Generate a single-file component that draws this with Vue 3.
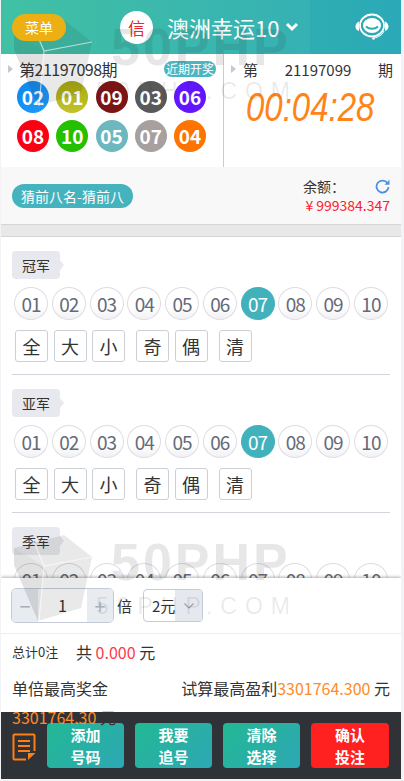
<template>
  <div class="page">
    <header class="top">
      <button class="menu-btn">菜单</button>
      <div class="title-wrap">
        <span class="xin">信</span>
        <span class="title">澳洲幸运10</span>
        <svg class="chev" width="14" height="10" viewBox="0 0 14 10"><path d="M2 2l5 5 5-5" fill="none" stroke="#fff" stroke-width="3" /></svg>
      </div>
      <svg class="headset" width="34" height="28" viewBox="0 0 34 28">
        <ellipse cx="17" cy="12.500" rx="12" ry="11" fill="none" stroke="#fff" stroke-width="1.800" />
        <path d="M4 8.500c-2.500 1-3.500 3-3.500 5s1 3.500 3.500 4.500zM30 8.500c2.500 1 3.500 3 3.500 5s-1 3.500-3.500 4.500z" fill="#fff" />
        <ellipse cx="17" cy="12.500" rx="9" ry="7.500" fill="#fff" />
        <path d="M11 13.500c3 3 9 3 12 0" fill="none" stroke="#2dadb3" stroke-width="2" />
        <path d="M29 18c-2 5-6 6-10 7" fill="none" stroke="#fff" stroke-width="1" />
        <circle cx="18.500" cy="25.500" r="1.300" fill="#fff" />
      </svg>
    </header>

    <section class="info">
      <div class="last">
        <div class="issue-row">
          <span class="tri"></span>
          <span class="issue">第21197098期</span>
          <span class="recent">近期开奖</span>
        </div>
        <div class="balls">
          <span v-for="b in drawn" :key="b.n" class="ball" :style="{ background: b.c }">{{ b.n }}</span>
        </div>
      </div>
      <div class="next">
        <div class="next-row">
          <span class="tri"></span>
          <span class="next-issue"><span>第</span><span>21197099</span><span>期</span></span>
        </div>
        <div class="clock">00:04:28</div>
      </div>
    </section>

    <section class="balance-bar">
      <span class="play-pill">猜前八名-猜前八</span>
      <div class="balance">
        <div class="balance-top">
          <span>余额：</span>
          <svg width="15" height="15" viewBox="0 0 15 15">
            <path d="M12.500 4.200A6 6 0 1 0 13.500 8" fill="none" stroke="#4a90e8" stroke-width="1.800" />
            <path d="M14.500 0.800v5h-5z" fill="#4a90e8" />
          </svg>
        </div>
        <div class="money"><span class="yen">¥</span>999384.347</div>
      </div>
    </section>
    <div class="band"></div>

    <main class="sections">
      <div v-for="(s, i) in ranks" :key="s" class="rank">
        <div class="rank-tag">{{ s }}</div>
        <div class="nums">
          <span v-for="n in nums" :key="n" :class="['num', { on: n === '07' && i < 2 }]">{{ n }}</span>
        </div>
        <div class="quick">
          <span v-for="q in quicks" :key="q.t" :class="['q', { gapped: q.gap }]">{{ q.t }}</span>
        </div>
      </div>
    </main>

    <footer class="panel">
      <div class="bet-row">
        <div class="stepper">
          <span class="step">−</span>
          <span class="val">1</span>
          <span class="step">+</span>
        </div>
        <span class="bei">倍</span>
        <div class="unit">
          <span class="unit-val">2元</span>
          <span class="unit-arrow">
            <svg width="12" height="8" viewBox="0 0 12 8"><path d="M1.500 1.500L6 6l4.500-4.500" fill="none" stroke="#9aa1ad" stroke-width="1.200" /></svg>
          </span>
        </div>
      </div>
      <div class="total-row">
        <span class="count">总计0注</span>
        <span class="sum">共 <em class="red">0.000</em> 元</span>
      </div>
      <div class="prize-row">
        <div class="prize-left">单倍最高奖金 <em class="orange">3301764.30</em> 元</div>
        <div class="prize-right">试算最高盈利<em class="orange">3301764.300</em> 元</div>
      </div>
      <div class="actions">
        <svg class="note" width="24" height="28" viewBox="0 0 24 28">
          <path d="M14 26.500H2.500a1 1 0 0 1-1-1V2.500a1 1 0 0 1 1-1h19a1 1 0 0 1 1 1V18" fill="none" stroke="#ff7f14" stroke-width="2" />
          <path d="M6 8h12M6 13h12M6 18h12" stroke="#ff7f14" stroke-width="2" />
          <path d="M16 27v-7h7.500z" fill="#ff7f14" />
        </svg>
        <button class="act">添加<br />号码</button>
        <button class="act">我要<br />追号</button>
        <button class="act">清除<br />选择</button>
        <button class="act red-btn">确认<br />投注</button>
      </div>
    </footer>

    <div v-for="w in ['wm-top', 'wm-bottom']" :key="w" :class="['watermark', w]">
      <svg class="wm-shield" width="80" height="96" viewBox="0 0 80 96">
        <path d="M1 20L51 7 79 29 68 80 25 93 1 37z" fill="rgba(40,40,40,.1)" />
        <path d="M1 37L25 93 31 38 1 20z" fill="rgba(40,40,40,.04)" />
        <path d="M20 12L31 38 79 29M31 38L26 93" fill="none" stroke="#fff" stroke-opacity=".6" stroke-width="1.200" />
      </svg>
      <div class="wm-big">50PHP</div>
      <div class="wm-small">50PHP.COM</div>
    </div>
  </div>
</template>

<script setup>
const drawn = [
  { n: '02', c: 'linear-gradient(135deg,#0f86ea,#1d9cff)' },
  { n: '01', c: 'linear-gradient(180deg,#a8a810,#c2c22a)' },
  { n: '09', c: '#7b1515' },
  { n: '03', c: '#595959' },
  { n: '06', c: '#6116ff' },
  { n: '08', c: '#fb0012' },
  { n: '10', c: '#25c000' },
  { n: '05', c: '#6db8bf' },
  { n: '07', c: '#a89f9f' },
  { n: '04', c: '#ff7400' },
]
const ranks = ['冠军', '亚军', '季军']
const nums = ['01', '02', '03', '04', '05', '06', '07', '08', '09', '10']
const quicks = [
  { t: '全' },
  { t: '大' },
  { t: '小' },
  { t: '奇', gap: true },
  { t: '偶' },
  { t: '清', gap: true },
]
</script>

<style>
html, body {
  margin: 0;
  background: #f3f3f5;
}
</style>

<style scoped>
.page {
  position: relative;
  width: 400px;
  height: 779px;
  margin-left: 1px;
  display: flex;
  flex-direction: column;
  overflow: hidden;
  background: #fff;
  color: #333;
  font-family: "Noto Sans CJK SC", "Noto Sans", sans-serif;
}
em {
  font-style: normal;
}
button {
  font-family: inherit;
  border: none;
  padding: 0;
}

.top {
  flex: none;
  height: 54px;
  display: flex;
  align-items: center;
  position: relative;
  background:
    linear-gradient(90deg, rgba(255, 255, 255, .04) 309px, transparent 309px),
    linear-gradient(90deg, #39bea0, #2ba9b7);
}
.menu-btn {
  position: relative;
  z-index: 6;
  width: 54px;
  height: 27px;
  margin-left: 11px;
  border-radius: 14px;
  background: #ecb014;
  color: #fff;
  font-size: 14px;
  line-height: 27px;
}
.title-wrap {
  display: flex;
  align-items: center;
  margin-left: 54px;
  color: #fff;
}
.xin {
  width: 33px;
  height: 33px;
  border-radius: 50%;
  background: #fff;
  color: #e8262c;
  font-size: 17px;
  line-height: 33px;
  text-align: center;
}
.title {
  margin-left: 14px;
  font-size: 22px;
  line-height: 30px;
}
.chev {
  margin-left: 6px;
}
.headset {
  margin-left: auto;
  margin-right: 12px;
}

.info {
  flex: none;
  height: 113px;
  display: flex;
  background: #fff;
}
.last {
  width: 222px;
  border-right: 1px solid #ccc;
}
.issue-row {
  display: flex;
  align-items: center;
  height: 30px;
  padding-left: 7px;
}
.tri {
  width: 0;
  height: 0;
  border-left: 5px solid #c3c8d4;
  border-top: 4px solid transparent;
  border-bottom: 4px solid transparent;
}
.issue {
  margin-left: 6px;
  font-size: 16px;
  line-height: 30px;
  letter-spacing: -.5px;
}
.recent {
  margin-left: auto;
  margin-right: 7px;
  width: 52px;
  height: 16px;
  border-radius: 8px;
  background: #4db5c0;
  color: #fff;
  font-size: 12px;
  line-height: 16px;
  text-align: center;
}
.balls {
  display: grid;
  grid-template-columns: repeat(5, 32px);
  gap: 7px 7.250px;
  margin: -3px 0 0 16px;
}
.ball {
  width: 32px;
  height: 32px;
  border-radius: 50%;
  color: #fff;
  font-size: 19px;
  font-weight: 700;
  line-height: 32px;
  text-align: center;
}
.next {
  flex: 1;
  padding-left: 7px;
}
.next-row {
  display: flex;
  align-items: center;
  height: 30px;
}
.next-issue {
  flex: 1;
  display: flex;
  justify-content: space-between;
  margin: 0 8px 0 7px;
  font-size: 15px;
}
.clock {
  margin: 4px 0 0 15px;
  color: #ff8418;
  font-family: "Liberation Sans", sans-serif;
  font-size: 33px;
  font-style: italic;
  line-height: 38px;
  transform: scaleY(1.25);
  transform-origin: 0 50%;
}

.balance-bar {
  flex: none;
  height: 58px;
  box-sizing: border-box;
  display: flex;
  align-items: center;
  justify-content: space-between;
  padding: 0 11px;
  background: #f8f8f8;
  border-bottom: 1px solid #d5d5d5;
}
.play-pill {
  width: 121px;
  height: 24px;
  border-radius: 12px;
  background: #45b3be;
  color: #fff;
  font-size: 14px;
  line-height: 24px;
  text-align: center;
}
.balance {
  width: 87px;
  font-size: 14px;
  line-height: 19px;
}
.balance-top {
  display: flex;
  justify-content: space-between;
  align-items: center;
}
.money {
  color: #ff1a2c;
  white-space: nowrap;
  text-align: right;
}
.yen {
  margin-right: 3px;
}
.band {
  flex: none;
  height: 12px;
  box-sizing: border-box;
  background: #e8e8e8;
  border-bottom: 1px solid #d5d5d5;
}

.sections {
  flex: 1;
  min-height: 0;
  overflow: hidden;
  padding: 14px 11px 0;
}
.rank {
  height: 123px;
  margin-bottom: 14px;
  border-bottom: 1px solid #d4d4dc;
}
.rank-tag {
  position: relative;
  width: 48px;
  height: 28px;
  border-radius: 4px;
  background: #e8e9ee;
  font-size: 14px;
  line-height: 28px;
  text-align: center;
}
.rank-tag::after {
  content: "";
  position: absolute;
  top: 9px;
  left: 48px;
  border-left: 4px solid #e8e9ee;
  border-top: 5px solid transparent;
  border-bottom: 5px solid transparent;
}
.nums {
  display: flex;
  justify-content: space-between;
  margin: 8px 2px 0;
}
.num {
  width: 34px;
  height: 33px;
  box-sizing: border-box;
  border: 1px solid #dcdce2;
  border-radius: 50%;
  background: linear-gradient(180deg, #fff 60%, #f1f1f4);
  color: #666a78;
  font-size: 19px;
  line-height: 31px;
  letter-spacing: -1px;
  text-align: center;
}
.num.on {
  border-color: #41b1bc;
  background: #41b1bc;
  color: #fff;
}
.quick {
  display: flex;
  gap: 5.500px;
  margin: 10px 0 0 3px;
}
.q {
  width: 33px;
  height: 32px;
  box-sizing: border-box;
  border: 1px solid #ccd0d6;
  border-radius: 3px;
  color: #333;
  font-size: 18px;
  line-height: 30px;
  text-align: center;
}
.q.gapped {
  margin-left: 5.500px;
}

.panel {
  flex: none;
  position: relative;
  background: #fff;
  box-shadow: 0 -1px 3px rgba(0, 0, 0, .3);
}
.bet-row {
  height: 56px;
  box-sizing: border-box;
  display: flex;
  align-items: center;
  padding: 0 0 0 10px;
  border-bottom: 1px solid #eee;
}
.stepper {
  width: 103px;
  height: 35px;
  box-sizing: border-box;
  display: flex;
  border: 1px solid #c5cbd6;
  border-radius: 5px;
  overflow: hidden;
}
.step {
  width: 26px;
  background: #e8ebf0;
  color: #a8afba;
  font-size: 20px;
  line-height: 33px;
  text-align: center;
}
.val {
  flex: 1;
  font-size: 16px;
  line-height: 33px;
  text-align: center;
}
.bei {
  margin: 0 11px 0 3px;
  font-size: 15px;
}
.unit {
  width: 60px;
  height: 33px;
  box-sizing: border-box;
  display: flex;
  border: 1px solid #c5cbd6;
  border-radius: 4px;
  overflow: hidden;
}
.unit-val {
  flex: 1;
  padding-left: 8px;
  font-size: 15px;
  line-height: 31px;
  white-space: nowrap;
}
.unit-arrow {
  width: 27px;
  display: flex;
  align-items: center;
  justify-content: center;
  background: #e5e8ef;
}
.total-row {
  height: 35px;
  display: flex;
  align-items: center;
  padding-left: 11px;
}
.count {
  width: 64px;
  font-size: 13px;
}
.sum {
  font-size: 16px;
}
.red {
  color: #ff3b4a;
}
.orange {
  color: #ff8a2a;
}
.prize-row {
  position: relative;
  z-index: 1;
  height: 43px;
  display: flex;
  justify-content: space-between;
  padding: 5px 11px 0;
  box-sizing: border-box;
  font-size: 16px;
  line-height: 29px;
}
.prize-left {
  width: 112px;
}
.prize-right {
  white-space: nowrap;
}
.actions {
  height: 67px;
  display: flex;
  align-items: center;
  padding: 0 11px;
  background: #2f3337;
}
.note {
  flex: none;
  margin-right: 11px;
  margin-top: 2px;
}
.act {
  width: 77px;
  height: 45px;
  margin-right: 11px;
  border-radius: 4px;
  background: linear-gradient(135deg, #22b894, #2ea8b4);
  color: #fff;
  font-size: 15px;
  font-weight: 700;
  line-height: 22px;
}
.act.red-btn {
  width: 78px;
  margin-right: 0;
  background: #ff2020;
}

.watermark {
  position: absolute;
  left: 12px;
  width: 290px;
  height: 96px;
  pointer-events: none;
  z-index: 5;
}
.wm-top {
  top: 13px;
}
.wm-bottom {
  top: 528px;
}
.wm-shield {
  position: absolute;
  left: 0;
  top: 0;
}
.wm-big {
  position: absolute;
  left: 98px;
  top: -1px;
  color: rgba(40, 40, 40, .11);
  font-family: "Liberation Sans", sans-serif;
  font-size: 52px;
  font-weight: 700;
  line-height: 70px;
  letter-spacing: 3px;
}
.wm-small {
  position: absolute;
  left: 83px;
  top: 63px;
  color: rgba(40, 40, 40, .1);
  font-family: "Liberation Sans", sans-serif;
  font-size: 23px;
  line-height: 30px;
  letter-spacing: 8px;
  white-space: nowrap;
}
</style>
